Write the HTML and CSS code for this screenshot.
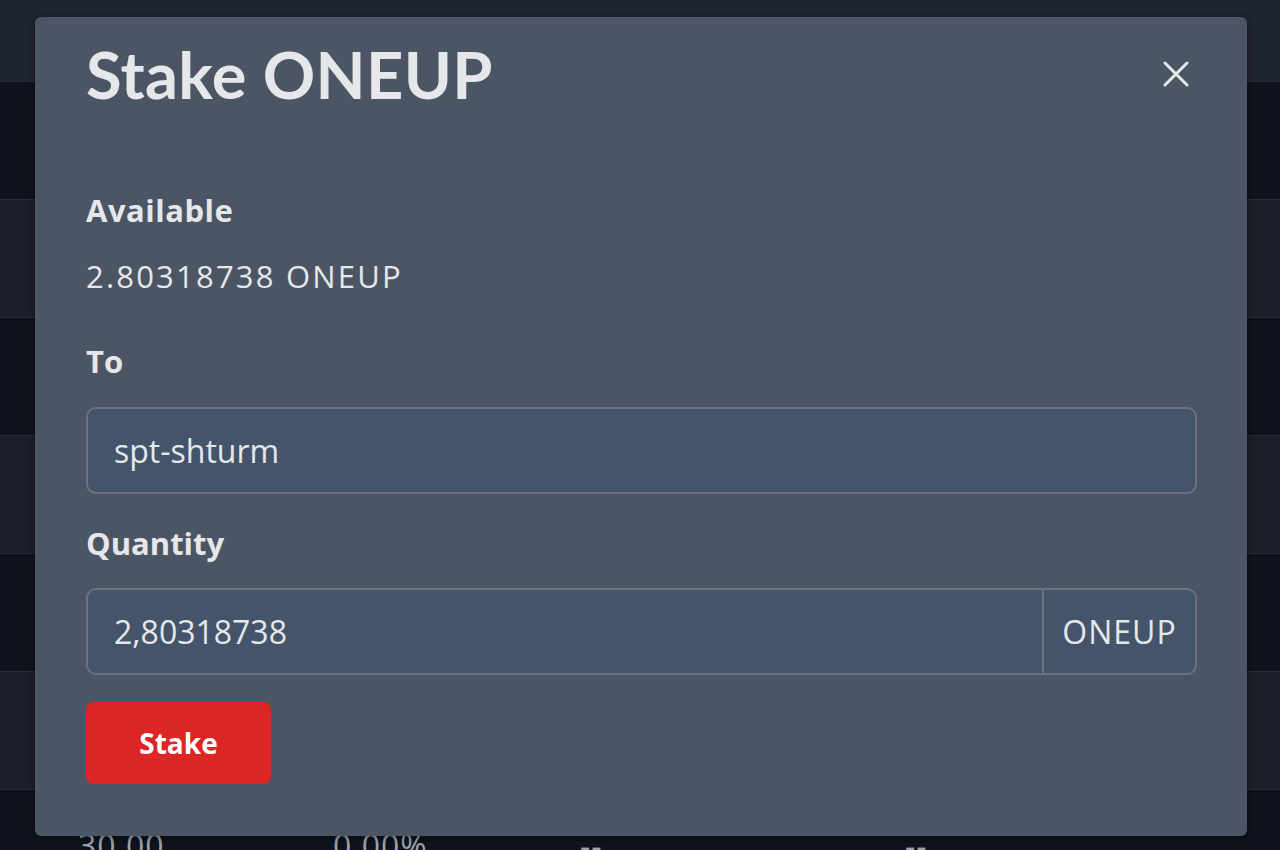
FILE: index.html
```html
<!DOCTYPE html>
<html lang="en">
<head>
<meta charset="utf-8">
<title>Stake ONEUP</title>
<link rel="stylesheet" href="styles.css">
</head>
<body>
<div class="page">
  <div class="topbar"></div>
  <div class="row dark"></div>
  <div class="row light"></div>
  <div class="row dark"></div>
  <div class="row light"></div>
  <div class="row dark"></div>
  <div class="row light"></div>
  <div class="row dark last">
    <span class="cell c1">30.00</span>
    <span class="cell c2">0.00%</span>
    <span class="cell c3">--</span>
    <span class="cell c4">--</span>
  </div>
</div>

<div class="modal">
  <div class="modal-header">
    <h1 class="title">Stake ONEUP</h1>
    <button class="close" aria-label="Close">
      <svg width="26" height="26" viewBox="0 0 26 26"><path d="M2 2 L24 24 M24 2 L2 24" stroke="#e5e7eb" stroke-width="3" stroke-linecap="round" fill="none"/></svg>
    </button>
  </div>
  <div class="label l-available">Available</div>
  <div class="value">2.80318738 ONEUP</div>
  <div class="label l-to">To</div>
  <div class="input">spt-shturm</div>
  <div class="label l-qty">Quantity</div>
  <div class="input group">
    <span class="group-text">2,80318738</span>
    <span class="addon">ONEUP</span>
  </div>
  <button class="stake">Stake</button>
</div>
</body>
</html>
```
FILE: styles.css
```css
* { box-sizing: border-box; }
html, body { margin: 0; padding: 0; }
body {
  width: 1280px;
  height: 850px;
  overflow: hidden;
  background: #0f141e;
  font-family: "Open Sans", Lato, sans-serif;
  color: #e5e7eb;
  position: relative;
}
.page { display: flex; flex-direction: column; }
.topbar { height: 81px; background: #1f2531; }
.row { height: 118px; border-top: 1px solid #262c37; position: relative; }
.row.dark { background: #0e131d; }
.row.light { background: #1a1f2a; }
.row.last { height: 67px; }
.cell {
  position: absolute;
  top: 38px;
  font-size: 32px;
  line-height: 36px;
  letter-spacing: 1px;
  color: #9ca3af;
}
.c1 { left: 78px; }
.c2 { left: 333px; }
.c3 { left: 580px; }
.c4 { left: 905px; }

.modal {
  position: absolute;
  left: 35px;
  top: 17px;
  width: 1212px;
  height: 819px;
  background: #4b5563;
  border-radius: 6px;
  padding: 0 50px 0 51px;
  box-shadow: 0 2px 8px rgba(0,0,0,0.4);
}
.modal-header {
  display: flex;
  justify-content: space-between;
  align-items: center;
  padding-top: 14px;
}
.title {
  margin: 0;
  font-family: Lato, "Open Sans", sans-serif;
  font-size: 65px;
  line-height: 86px;
  font-weight: 700;
  letter-spacing: 0.3px;
  color: #e5e7eb;
}
.close {
  background: none;
  border: 0;
  padding: 0;
  margin-right: 8px;
  width: 26px;
  height: 26px;
  display: flex;
}
.label {
  font-size: 31px;
  font-weight: 700;
  line-height: 36px;
}
.l-available { margin-top: 75px; letter-spacing: 0.5px; }
.value { font-size: 31px; line-height: 36px; margin-top: 30px; letter-spacing: 2.2px; }
.l-to { margin-top: 49px; }
.l-qty { margin-top: 31px; }
.input {
  margin-top: 28px;
  height: 87px;
  background: #44546a;
  border: 2px solid #6b7280;
  border-radius: 10px;
  font-size: 32px;
  display: flex;
  align-items: center;
  padding-left: 26px;
}
.input.group { margin-top: 27px; padding-left: 0; }
.group-text { flex: 1; padding-left: 26px; }
.addon {
  width: 153px;
  height: 100%;
  border-left: 2px solid #6b7280;
  display: flex;
  align-items: center;
  justify-content: center;
  letter-spacing: 1px;
}
.stake {
  margin-top: 27px;
  width: 185px;
  height: 82px;
  background: #dc2626;
  color: #fff;
  border: 0;
  border-radius: 8px;
  font-family: "Open Sans", Lato, sans-serif;
  font-size: 28px;
  font-weight: 700;
}
```
